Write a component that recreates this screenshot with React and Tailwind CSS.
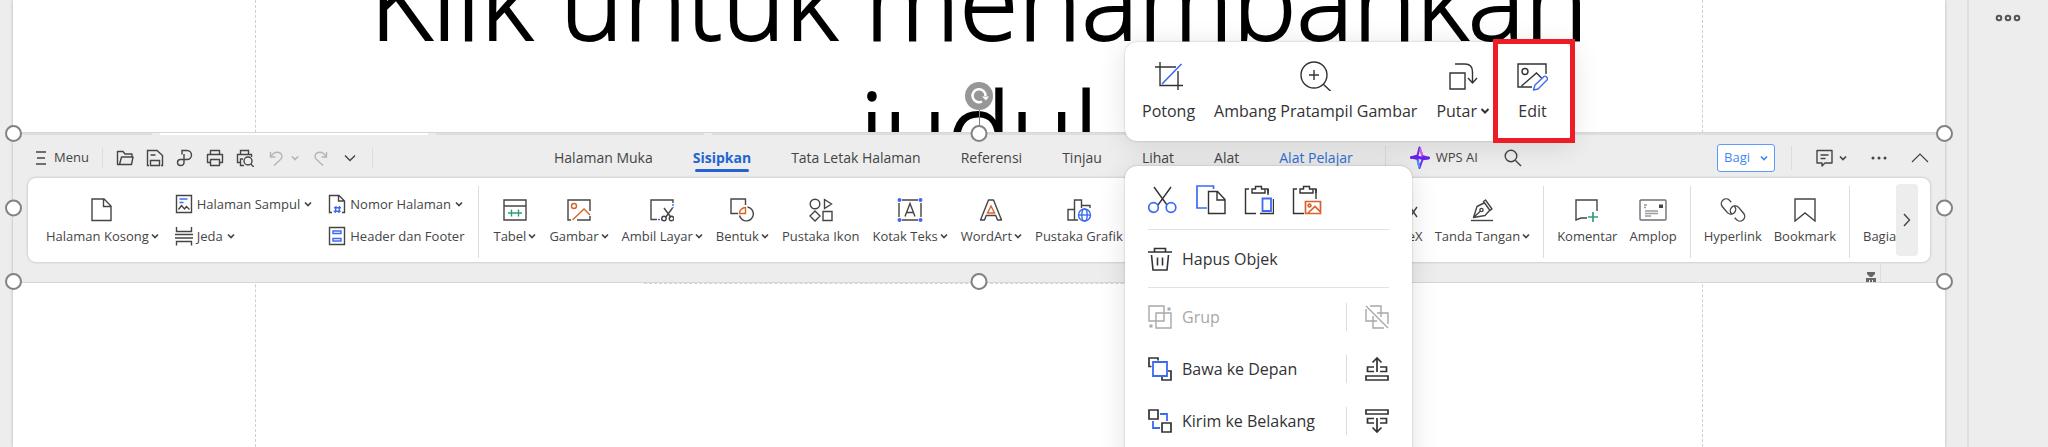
import React from 'react';

const Icon = ({ w = 24, h = 24, children, className = '' }) => (
  <svg
    width={w}
    height={h}
    viewBox={`0 0 ${w} ${h}`}
    fill="none"
    stroke="currentColor"
    strokeWidth="1.4"
    className={`shrink-0 ${className}`}
    aria-hidden="true"
  >
    {children}
  </svg>
);

const BLUE = '#3c6bf0';
const ORANGE = '#d9622b';
const GREEN = '#2f9e78';

const Chevron = ({ className = '' }) => (
  <Icon w={8} h={8} className={className}>
    <path d="M1 2.500l3 3 3-3" strokeWidth="1.700" />
  </Icon>
);

const Divider = ({ className = '' }) => (
  <span className={`w-px shrink-0 bg-[#dcdcdc] ${className}`} />
);

/* ---------- ribbon ---------- */

const RibbonButton = ({ icon, label, menu }) => (
  <button type="button" className="flex shrink-0 flex-col items-center gap-1">
    {icon}
    <span className="flex items-center gap-0.5 whitespace-nowrap leading-5">
      {label}
      {menu && <Chevron />}
    </span>
  </button>
);

const RibbonRow = ({ icon, label, menu }) => (
  <button type="button" className="flex items-center gap-1 whitespace-nowrap leading-5">
    {icon}
    {label}
    {menu && <Chevron />}
  </button>
);

const pageIcon = (
  <Icon>
    <path d="M2 1h12l7 7v14.500h-19zM13.500 1v7.500h7.500" />
  </Icon>
);

const coverIcon = (
  <Icon w={18} h={20}>
    <path d="M1.500 1.500h15v17h-15z" />
    <path d="M4.500 5h8M4.500 8.500h4" stroke={BLUE} />
    <path d="M3.500 15.500l3-4 3 3.500 2-2.500 3 3" />
  </Icon>
);

const breakIcon = (
  <Icon w={18} h={20}>
    <path d="M1.500 1v4.500h15V1M0 8.500h18M0 12h18M1.500 19.500v-4h15v4" />
  </Icon>
);

const pageNumberIcon = (
  <Icon w={18} h={20}>
    <path d="M4 18.500H1.500v-17H11l5.500 5.500v11.500H14M10.500 1.500V7h6" />
    <path d="M8 12l-.6 7M11.500 12l-.6 7M6 13.800h7M5.700 17.200h7" stroke={BLUE} />
  </Icon>
);

const headerFooterIcon = (
  <Icon w={18} h={20}>
    <path d="M1.500 1.500h15v17h-15z" />
    <path d="M5 5h8v2.500H5zM5 12.500h8V15H5z" stroke={BLUE} />
  </Icon>
);

const leftTools = [
  {
    label: 'Tabel',
    menu: true,
    icon: (
      <Icon>
        <path d="M1 2h22v20H1zM1 8h22" />
        <path d="M5 15h14M8.500 11.500v7M15.500 11.500v7" stroke={GREEN} />
      </Icon>
    ),
  },
  {
    label: 'Gambar',
    menu: true,
    icon: (
      <Icon>
        <path d="M4 22H1V2h22v11M23 18v4H10" />
        <g stroke={ORANGE}>
          <circle cx="7" cy="8" r="2.500" />
          <path d="M5.500 22L17 11l6 6" />
        </g>
      </Icon>
    ),
  },
  {
    label: 'Ambil Layar',
    menu: true,
    icon: (
      <Icon>
        <path d="M7 21.500H1V2h22v3" />
        <path d="M23 6v4M8 21.500h4" stroke={BLUE} strokeDasharray="2 1" />
        <path d="M14 10l7 9.500M22.500 10l-7 9.500" />
        <circle cx="14" cy="20.500" r="2.200" />
        <circle cx="21.500" cy="20.500" r="2.200" />
      </Icon>
    ),
  },
  {
    label: 'Bentuk',
    menu: true,
    icon: (
      <Icon>
        <path d="M8 15.500H1V1h14.500v6" />
        <path d="M17.500 9a7 7 0 1 1-8 8.500" />
        <path d="M9.500 15.500a6 6 0 0 1 6-6v6z" stroke={ORANGE} />
      </Icon>
    ),
  },
  {
    label: 'Pustaka Ikon',
    icon: (
      <Icon>
        <circle cx="6" cy="6" r="4.800" />
        <path d="M15.500 1.500l7 4.500-7 4.500zM6 13l5 5-5 5-5-5zM14 13.500h9v9h-9z" />
      </Icon>
    ),
  },
  {
    label: 'Kotak Teks',
    menu: true,
    icon: (
      <Icon w={26}>
        <path d="M5 2h16M5 22h16M2 5v14M24 5v14M8 18.500L13 5.500l5 13M9.500 14.500h7" />
        <g fill={BLUE} stroke="none">
          <circle cx="2.500" cy="2" r="2" />
          <circle cx="23.500" cy="2" r="2" />
          <circle cx="2.500" cy="22" r="2" />
          <circle cx="23.500" cy="22" r="2" />
        </g>
      </Icon>
    ),
  },
  {
    label: 'WordArt',
    menu: true,
    icon: (
      <Icon>
        <path d="M1.500 22L9.500 2h5l8 20h-4l-1.700-4.500H7.200L5.500 22z" strokeLinejoin="round" />
        <path d="M12 8l-3.500 7h7z" stroke={ORANGE} />
      </Icon>
    ),
  },
  {
    label: 'Pustaka Grafik',
    icon: (
      <Icon w={26}>
        <path d="M2 11.500h6.500V22H2zM12 22H8.500V2h7v8M15.500 7.500H24V10" />
        <g stroke={BLUE}>
          <circle cx="18.500" cy="17" r="6" />
          <ellipse cx="18.500" cy="17" rx="2.700" ry="6" />
          <path d="M12.500 17h12" />
        </g>
      </Icon>
    ),
  },
];

const latexTool = {
  label: 'LaTeX',
  icon: (
    <Icon w={32}>
      <path d="M21 9l7 10M28 9l-7 10M4 4v15h8" />
    </Icon>
  ),
};

const signTool = {
  label: 'Tanda Tangan',
  menu: true,
  icon: (
    <Icon>
      <path d="M1 22.500h22" />
      <path d="M13.500 3.500l2-1.500 6.500 9-2 1.500zM14 5l-7 3.500-3.500 11L15 17.500l4.500-5M3.500 19.500l7-6.500" strokeLinejoin="round" />
      <circle cx="11.500" cy="12" r="1.600" />
    </Icon>
  ),
};

const commentTools = [
  {
    label: 'Komentar',
    icon: (
      <Icon w={26}>
        <path d="M13 20H7l-5 2V2h21v11" />
        <path d="M19 14v10M14 19h10" stroke={GREEN} strokeWidth="1.700" />
      </Icon>
    ),
  },
  {
    label: 'Amplop',
    icon: (
      <Icon w={28}>
        <rect x="1" y="2" width="26" height="20" rx="1" stroke="#6a7078" />
        <path d="M22 6.500v3.500" strokeWidth="4" />
        <path d="M5 7h3M5 9.500h2M6 13h13M6 15.500h13M6 18h6" stroke="#9a9a9a" />
      </Icon>
    ),
  },
];

const linkTools = [
  {
    label: 'Hyperlink',
    icon: (
      <Icon w={26}>
        <rect
          x="-4.800"
          y="-8.500"
          width="9.600"
          height="17"
          rx="4.800"
          transform="translate(8.500 8.500) rotate(-40)"
          strokeDasharray="40.400 4.500"
          strokeDashoffset="-14"
        />
        <rect
          x="-4.800"
          y="-8.500"
          width="9.600"
          height="17"
          rx="4.800"
          transform="translate(17.500 15.500) rotate(140)"
          strokeDasharray="40.400 4.500"
          strokeDashoffset="-14"
        />
      </Icon>
    ),
  },
  {
    label: 'Bookmark',
    icon: (
      <Icon>
        <path d="M2 1h20v22l-10-8-10 8z" />
      </Icon>
    ),
  },
];

const Ribbon = () => (
  <div className="mx-[15px] flex rounded-lg bg-white text-[13px] text-[#454545] shadow-[0_0_3px_rgba(0,0,0,0.25)]">
    <div className="flex min-w-0 grow pt-5 pb-4 pl-[18px]">
      <RibbonButton icon={pageIcon} label="Halaman Kosong" menu />
      <div className="-mt-1 ml-4 flex flex-col items-start justify-between">
        <RibbonRow icon={coverIcon} label="Halaman Sampul" menu />
        <RibbonRow icon={breakIcon} label="Jeda" menu />
      </div>
      <div className="-mt-1 ml-4 flex flex-col items-start justify-between">
        <RibbonRow icon={pageNumberIcon} label="Nomor Halaman" menu />
        <RibbonRow icon={headerFooterIcon} label="Header dan Footer" />
      </div>
      <Divider className="-my-3 mx-3.5" />
      <div className="flex gap-[13px]">
        {leftTools.map((tool) => (
          <RibbonButton key={tool.label} {...tool} />
        ))}
      </div>
      <div className="ml-auto flex gap-3">
        <RibbonButton {...latexTool} />
        <RibbonButton {...signTool} />
        <Divider className="-my-3 mx-px" />
        {commentTools.map((tool) => (
          <RibbonButton key={tool.label} {...tool} />
        ))}
        <Divider className="-my-3 mx-px" />
        {linkTools.map((tool) => (
          <RibbonButton key={tool.label} {...tool} />
        ))}
        <Divider className="-my-3 mx-px" />
        <div className="flex w-[33px] items-end overflow-hidden leading-5">Bagian</div>
      </div>
    </div>
    <button
      type="button"
      aria-label="Berikutnya"
      className="my-1.5 mr-3 flex w-[22px] shrink-0 items-center justify-center rounded bg-[#ededed]"
    >
      <Icon w={8} h={14}>
        <path d="M1 1l5.500 6L1 13" />
      </Icon>
    </button>
  </div>
);

/* ---------- quick access bar and tabs ---------- */

const tabs = ['Halaman Muka', 'Sisipkan', 'Tata Letak Halaman', 'Referensi', 'Tinjau', 'Lihat', 'Alat', 'Alat Pelajar'];

const Tab = ({ name }) => {
  if (name === 'Sisipkan') {
    return (
      <button type="button" className="relative font-bold text-[#2364d2]">
        {name}
        <span className="absolute inset-x-0.5 -bottom-1 h-[3px] rounded bg-[#2364d2]" />
      </button>
    );
  }
  return (
    <button type="button" className={name === 'Alat Pelajar' ? 'text-[#2f6fd8]' : ''}>
      {name}
    </button>
  );
};

const QuickBar = () => (
  <div className="flex w-[541px] shrink-0 items-center pl-[22px]">
    <button type="button" className="flex items-center gap-[7px]">
      <Icon w={12} h={16}>
        <path d="M1 2h10M2 8h8M1 14h10" />
      </Icon>
      Menu
    </button>
    <Divider className="mx-[13px] h-5" />
    <div className="flex items-center gap-3">
      <button type="button" aria-label="Buka">
        <Icon w={18} h={18}>
          <path d="M4 15.500H1.500V2.500H7l2 2.500h7v3M3.500 15.500L5.500 8H17l-1.500 7.500z" strokeLinejoin="round" />
        </Icon>
      </button>
      <button type="button" aria-label="Simpan">
        <Icon w={18} h={18}>
          <path d="M3 16.500H1.500v-15H11l5.500 5v10H15M4.500 16.500v-5h9v5zM4.500 6h5" />
        </Icon>
      </button>
      <button type="button" aria-label="Ekspor PDF">
        <Icon w={18} h={18}>
          <path d="M6 5.500v-4h5a4.500 4.500 0 0 1 0 9H4.500a3 3 0 0 0 0 6c2 0 3.500-1 3.500-3V5" />
        </Icon>
      </button>
      <button type="button" aria-label="Cetak">
        <Icon w={18} h={18}>
          <path d="M4.500 5V1.500h9V5M4 13.500H1.500V5.500h15v8H14M4.500 10.500h9v6h-9z" strokeLinejoin="round" />
        </Icon>
      </button>
      <button type="button" aria-label="Pratinjau Cetak">
        <Icon w={18} h={18}>
          <path d="M4.500 5V1.500h8V5M4 13.500H1.500V5.500h14V8M7 10H4.500v6.500H8" />
          <circle cx="12" cy="12" r="4" />
          <path d="M14.800 15l3 3" />
        </Icon>
      </button>
    </div>
    <button type="button" aria-label="Urungkan" className="ml-[15px] flex items-center gap-2 text-[#b5b5b5]">
      <Icon w={14} h={16}>
        <path d="M1.500 2v5h5M1.500 7C4 3 7 1.500 10 2.500s4 4.500 1.500 7L5 15.500" />
      </Icon>
      <Chevron />
    </button>
    <button type="button" aria-label="Ulangi" className="ml-[15px] text-[#b5b5b5]">
      <Icon w={14} h={16}>
        <path d="M12.500 2v5h-5M12.500 7C10 3 7 1.500 4 2.500s-4 4.500-1.500 7L9 15.500" />
      </Icon>
    </button>
    <button type="button" aria-label="Lainnya" className="ml-4">
      <Icon w={12} h={8}>
        <path d="M1 1.500l5 5 5-5" />
      </Icon>
    </button>
    <Divider className="ml-4 h-5" />
  </div>
);

const TopBar = () => (
  <div className="flex h-[43px] items-center pt-0.5 text-[13px] text-[#454545]">
    <QuickBar />
    <div className="flex items-center gap-10 whitespace-nowrap text-sm">
      {tabs.map((name) => (
        <Tab key={name} name={name} />
      ))}
    </div>
    <Divider className="ml-8 h-6" />
    <button type="button" className="ml-6 flex items-center gap-1.5 whitespace-nowrap">
      <Icon w={20} h={24}>
        <path
          d="M9.500 1.500L7.500 9.500 1.500 11.500 7.500 13 9.500 22l3-8.500 6-1.500-6-2z"
          fill="#ededed"
          stroke="#6f2bf5"
          strokeWidth="2"
          strokeLinejoin="round"
        />
        <path d="M1.500 11.500l5.500-.5 6 1.500 5.500-.5" stroke="#6a22f0" strokeWidth="3" strokeLinecap="round" />
        <path d="M10 2.500l2.300 7" stroke="#f062d8" strokeWidth="2" />
        <path d="M7.500 14.500l1.800 7" stroke="#3fa4ff" strokeWidth="2" />
      </Icon>
      WPS AI
    </button>
    <button type="button" aria-label="Cari" className="ml-[26px]">
      <Icon w={18} h={18}>
        <circle cx="7" cy="7" r="5.800" />
        <path d="M11.300 11.300L17 17" />
      </Icon>
    </button>
    <button
      type="button"
      className="ml-auto flex h-7 items-center gap-2.5 rounded-[3px] border border-[#5b9bff] bg-white px-1.5 text-[#3f88f7]"
    >
      Bagi
      <Chevron />
    </button>
    <Divider className="ml-4 h-6" />
    <button type="button" aria-label="Komentar" className="ml-6 flex items-center gap-1.5">
      <Icon w={17} h={18}>
        <path d="M1 1.500h15v12.500H9L6 17v-3H1zM4.500 6h8M4.500 9.500h5" strokeLinejoin="round" />
      </Icon>
      <Chevron />
    </button>
    <button type="button" aria-label="Opsi" className="ml-6">
      <Icon w={16} h={4}>
        <g fill="currentColor" stroke="none">
          <circle cx="2" cy="2" r="1.500" />
          <circle cx="8" cy="2" r="1.500" />
          <circle cx="14" cy="2" r="1.500" />
        </g>
      </Icon>
    </button>
    <button type="button" aria-label="Ciutkan" className="ml-6 mr-4">
      <Icon w={18} h={10}>
        <path d="M1 9l8-8 8 8" strokeWidth="1.200" />
      </Icon>
    </button>
  </div>
);

/* ---------- selection frame ---------- */

const Handle = ({ className }) => (
  <span className={`absolute size-[17px] rounded-full border-2 border-[#828282] bg-white ${className}`} />
);

const SelectionHandles = () => (
  <>
    <span className="absolute -top-6 left-1/2 h-6 w-px bg-[#828282]" />
    <span className="absolute -top-[51px] left-1/2 flex size-7 -translate-x-1/2 items-center justify-center rounded-full bg-[#979797] text-white">
      <Icon w={20} h={20}>
        <path d="M13 15.500A6.500 6.500 0 1 1 16.500 10" strokeWidth="2.500" />
        <path d="M13 10.500h7L17 14.500z" fill="currentColor" stroke="none" />
      </Icon>
    </span>
    <Handle className="-left-2 -top-2" />
    <Handle className="left-1/2 -top-2 -translate-x-1/2" />
    <Handle className="-right-2 -top-2" />
    <Handle className="-left-2 top-1/2 -translate-y-1/2" />
    <Handle className="-right-2 top-1/2 -translate-y-1/2" />
    <Handle className="-bottom-2 -left-2" />
    <Handle className="-bottom-2 left-1/2 -translate-x-1/2" />
    <Handle className="-bottom-2 -right-2" />
  </>
);

const SelectedPicture = () => (
  <div className="relative border-y border-[#d3d6dc] bg-[#ededed]">
    <div className="flex h-0.5 gap-2">
      <span className="w-[139px] bg-[#dddee0]" />
      <span className="w-[268px] bg-white" />
      <span className="w-[268px] bg-[#dddee0]" />
      <span className="grow bg-[#dddee0]" />
    </div>
    <TopBar />
    <Ribbon />
    <div className="flex h-5 items-end justify-end pr-16 text-[#666]">
      <Icon w={10} h={10} className="mr-1">
        <path d="M1 0h8v2L6 5H4L1 2zM0 6h10v4H0z" fill="currentColor" stroke="none" />
        <path d="M3.500 8v2M6.500 8v2" stroke="#ededed" strokeWidth="1" />
      </Icon>
      <Divider className="h-full" />
    </div>
    <SelectionHandles />
  </div>
);

/* ---------- floating menus ---------- */

const ToolButton = ({ icon, label, menu }) => (
  <button type="button" className="flex flex-col items-center gap-2">
    {icon}
    <span className="flex items-center gap-[3px] whitespace-nowrap leading-6">
      {label}
      {menu && (
        <Icon w={10} h={8}>
          <path d="M1.500 2l3.500 3.500L8.500 2" strokeWidth="2" />
        </Icon>
      )}
    </span>
  </button>
);

const PictureToolbar = () => (
  <div className="absolute left-[1112px] top-[42px] flex h-[99px] gap-[19px] rounded-xl bg-white pl-[17px] pr-4 pt-[19px] text-base text-[#333] shadow-[0_4px_28px_rgba(0,0,0,0.12),0_0_2px_rgba(0,0,0,0.25)]">
    <ToolButton
      label="Potong"
      icon={
        <Icon w={30} h={30}>
          <path d="M1 6h21M6 1v23.500h23M24 10v19" />
          <path d="M8 23L27.500 3" stroke={BLUE} strokeWidth="1.600" />
        </Icon>
      }
    />
    <ToolButton
      label="Ambang Pratampil Gambar"
      icon={
        <Icon w={34} h={30}>
          <circle cx="15" cy="14" r="13" />
          <path d="M15 9v10M10 14h10M24 23l8.500 8" />
        </Icon>
      }
    />
    <ToolButton
      label="Putar"
      menu
      icon={
        <Icon w={30} h={30}>
          <path d="M2 12h15v16H2zM7 3h10c5 0 7.500 3 7.500 8v10.500M20 17l4.500 5 4.500-5" />
        </Icon>
      }
    />
    <button
      type="button"
      className="-ml-4 -mr-[18px] -mt-[22px] flex h-[104px] w-[82px] flex-col items-center gap-2 border-5 border-[#ee1c25] pt-[17px] pr-[3px]"
    >
      <Icon w={32} h={30}>
        <path d="M16 26H2V3h28v10M5.500 25L20.500 12l5 5" />
        <circle cx="9" cy="10.500" r="3" />
        <path d="M17.500 29l1.500-5 9-8.500c1.500-1.200 4.500 1.500 3 3.500l-9 9z" stroke={BLUE} strokeLinejoin="round" />
      </Icon>
      <span className="leading-6">Edit</span>
    </button>
  </div>
);

const clipboardPath = 'M5 4H1.500v24.500H12M8 8V4h3.500V1.500h6V4H21v4zM24 8V4';

const MenuRow = ({ icon, label, action, actionLabel, disabled }) => (
  <div className={`flex h-[52px] items-center ${disabled ? 'text-[#a8a8a8]' : ''}`}>
    <button type="button" disabled={disabled} className="flex grow items-center gap-2.5">
      {icon}
      {label}
    </button>
    <Divider className="h-7" />
    <button type="button" disabled={disabled} aria-label={actionLabel} className="ml-[18px]">
      {action}
    </button>
  </div>
);

const ContextMenu = () => (
  <div className="absolute left-[1112px] top-[166px] w-[287px] rounded-xl bg-white px-[23px] pb-8 text-base text-[#333] shadow-[0_4px_28px_rgba(0,0,0,0.12),0_0_2px_rgba(0,0,0,0.25)]">
    <div className="flex gap-[18px] border-b border-[#e2e2e2] pb-3.5 pt-[19px]">
      <button type="button" aria-label="Potong">
        <Icon w={30} h={30}>
          <path d="M6 2l13 18M23 2L10 20" />
          <g stroke={BLUE} strokeWidth="1.700">
            <circle cx="5.500" cy="22.500" r="4.800" />
            <circle cx="23" cy="22.500" r="4.800" />
          </g>
        </Icon>
      </button>
      <button type="button" aria-label="Salin">
        <Icon w={30} h={30}>
          <path d="M11 23H1V1h16.500v3" stroke={BLUE} strokeWidth="1.700" />
          <path d="M12.500 6.500h9l7.500 8v14H12.500zM21 6.500V15h8" />
        </Icon>
      </button>
      <button type="button" aria-label="Tempel">
        <Icon w={30} h={30}>
          <path d={clipboardPath} />
          <path d="M21.500 4H24v6M29.500 14v14.500H16" />
          <path d="M18.500 13.500h8.500v12.500h-8.500z" stroke={BLUE} strokeWidth="1.800" />
        </Icon>
      </button>
      <button type="button" aria-label="Tempel sebagai Gambar">
        <Icon w={30} h={30}>
          <path d={clipboardPath} />
          <path d="M21.500 4H24v10" />
          <g stroke={ORANGE} strokeWidth="1.700">
            <path d="M13.500 16.500h15v12h-15zM16 28l7-6.500 5 5" />
            <circle cx="17.500" cy="20.500" r="1.400" />
          </g>
        </Icon>
      </button>
    </div>
    <button type="button" className="flex h-[58px] w-full items-center gap-2.5 border-b border-[#e2e2e2]">
      <Icon>
        <path d="M0 5h24M6.500 5V1.500h11V5M3.500 8l1.500 15h14L20.500 8M9.500 10.500v8M14.500 10.500v8" strokeWidth="1.600" />
      </Icon>
      Hapus Objek
    </button>
    <div className="pt-[3px]">
      <MenuRow
        disabled
        label="Grup"
        actionLabel="Pisahkan Grup"
        icon={
          <Icon>
            <path d="M1 1h15v15H1zM8 8h15v15H8z" />
            <path d="M19.500 4h3M1.500 21h3" strokeWidth="3" />
          </Icon>
        }
        action={
          <Icon>
            <path d="M1 4v12h7M5 1h11v11M8 11v12h11M12 8h11v11M1 1l22 22M8 16h4" />
          </Icon>
        }
      />
      <MenuRow
        label="Bawa ke Depan"
        actionLabel="Maju"
        icon={
          <Icon>
            <path d="M3.500 9.500H1V1h9v2.500M20 14h3v9h-9v-3" strokeWidth="1.700" />
            <path d="M5 5h14v14H5z" stroke={BLUE} strokeWidth="1.800" />
          </Icon>
        }
        action={
          <Icon>
            <path d="M12 15V1.500M7.500 5.500L12 1l4.500 4.500M9 10H2.500v4.500H9M15 10h6.500v4.500H15M1 19h22v4H1z" strokeWidth="1.700" />
          </Icon>
        }
      />
      <MenuRow
        label="Kirim ke Belakang"
        actionLabel="Mundur"
        icon={
          <Icon>
            <path d="M12 5h7v7M5 12v7h7" stroke={BLUE} strokeWidth="1.800" />
            <path d="M1 1h9v9H1zM14 14h9v9h-9z" strokeWidth="1.700" />
          </Icon>
        }
        action={
          <Icon>
            <path d="M12 9v13.500M7.500 18.500L12 23l4.500-4.500M9 14H2.500V9.500H9M15 14h6.500V9.500H15M1 1h22v4H1z" strokeWidth="1.700" />
          </Icon>
        }
      />
    </div>
  </div>
);

const App = () => {
  return (
    <div className="flex h-screen overflow-hidden bg-[#ededed] font-['Open_Sans','Noto_Sans',sans-serif]">
      <main className="flex min-w-0 grow pl-[13px] pr-[22px]">
        <div className="relative flex min-w-0 grow flex-col bg-white shadow-[0_0_3px_rgba(0,0,0,0.25)]">
          <span className="absolute inset-y-0 left-[242px] border-l border-dashed border-[#cfcfcf]" />
          <span className="absolute inset-y-0 right-[242px] border-l border-dashed border-[#cfcfcf]" />
          <div className="flex h-[132px] shrink-0 justify-center overflow-hidden">
            <h1 className="-mt-[66px] w-[1400px] text-center text-[107px] font-light leading-[130px] text-black [-webkit-text-stroke:2px_black]">
              Klik untuk menambahkan judul
            </h1>
          </div>
          <SelectedPicture />
          <span className="mx-auto w-[670px] border-t border-dashed border-[#d4d4d4]" />
          <PictureToolbar />
          <ContextMenu />
        </div>
      </main>
      <aside className="w-[81px] shrink-0 border-l-2 border-[#dedede] pl-[26px] pt-[14px] text-[#555]">
        <button type="button" aria-label="Opsi lainnya" className="block">
          <Icon w={26} h={8}>
            <g strokeWidth="2">
              <circle cx="4" cy="4" r="2.300" />
              <circle cx="13" cy="4" r="2.300" />
              <circle cx="22" cy="4" r="2.300" />
            </g>
          </Icon>
        </button>
      </aside>
    </div>
  );
};

export default App;
